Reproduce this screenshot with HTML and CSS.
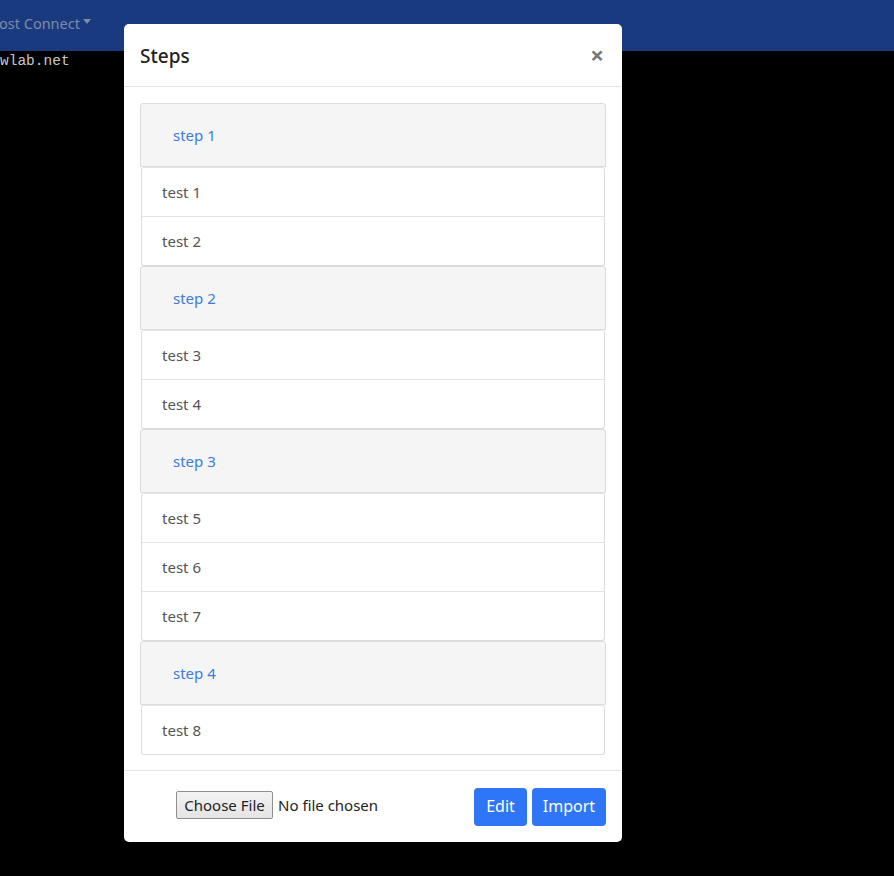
FILE: index.html
```html
<!DOCTYPE html>
<html>
<head>
<meta charset="utf-8">
<link rel="stylesheet" href="styles.css">
</head>
<body>
<nav class="navbar">
  <span class="nav-item">ost Connect<span class="caret"></span></span>
</nav>
<pre class="terminal">wlab.net</pre>

<div class="modal">
  <div class="modal-header">
    <h4 class="modal-title">Steps</h4>
    <span class="close">&times;</span>
  </div>
  <div class="modal-body">
    <div class="panel">
      <div class="panel-heading">step 1</div>
      <ul class="list-group">
        <li class="list-item">test 1</li>
        <li class="list-item">test 2</li>
      </ul>
    </div>
    <div class="panel">
      <div class="panel-heading">step 2</div>
      <ul class="list-group">
        <li class="list-item">test 3</li>
        <li class="list-item">test 4</li>
      </ul>
    </div>
    <div class="panel">
      <div class="panel-heading">step 3</div>
      <ul class="list-group">
        <li class="list-item">test 5</li>
        <li class="list-item">test 6</li>
        <li class="list-item">test 7</li>
      </ul>
    </div>
    <div class="panel">
      <div class="panel-heading">step 4</div>
      <ul class="list-group">
        <li class="list-item">test 8</li>
      </ul>
    </div>
  </div>
  <div class="modal-footer">
    <div class="file-input">
      <span class="file-btn">Choose File</span>
      <span class="file-name">No file chosen</span>
    </div>
    <div class="actions">
      <button class="btn btn-edit">Edit</button>
      <button class="btn btn-import">Import</button>
    </div>
  </div>
</div>
</body>
</html>
```
FILE: styles.css
```css
* { box-sizing: border-box; }
html, body { margin: 0; padding: 0; }
body {
  background: #000;
  width: 894px;
  height: 876px;
  overflow: hidden;
  font-family: "Noto Sans", "Open Sans", sans-serif;
  position: relative;
}
.navbar {
  height: 51px;
  background: #1a3a80;
  display: flex;
  align-items: center;
}
.nav-item {
  color: #7f8aa6;
  font-size: 14.5px;
  margin-left: -1px;
  margin-top: -5px;
  display: flex;
  align-items: center;
}
.caret {
  display: inline-block;
  width: 0;
  height: 0;
  border-left: 4px solid transparent;
  border-right: 4px solid transparent;
  border-top: 5px solid #7f8aa6;
  margin-left: 3px;
  margin-top: -3px;
}
.terminal {
  margin: 0;
  padding: 2px 0 0 0;
  font-family: "Liberation Mono", monospace;
  font-size: 14.5px;
  line-height: 17px;
  color: #c8c8c8;
}
.modal {
  position: absolute;
  left: 124px;
  top: 24px;
  width: 498px;
  height: 818px;
  background: #fff;
  border-radius: 5px;
  display: flex;
  flex-direction: column;
}
.modal-header {
  height: 63px;
  border-bottom: 1px solid #e3e3e3;
  display: flex;
  align-items: center;
  justify-content: space-between;
  padding: 0 17px 0 16px;
}
.modal-title {
  margin: 0;
  font-size: 19px;
  font-weight: 500;
  color: #222;
  padding-top: 2px;
}
.close {
  font-size: 24px;
  font-weight: 700;
  color: #777;
  line-height: 1;
  padding-bottom: 1px;
  margin-right: 1px;
}
.modal-body {
  padding: 16px 16px 16px 16px;
  height: 684px;
  border-bottom: 1px solid #e3e3e3;
}
.panel-heading {
  height: 64px;
  background: #f5f5f5;
  border: 1px solid #dcdcdc;
  border-radius: 3px 3px 0 0;
  display: flex;
  align-items: center;
  padding-left: 32px;
  padding-bottom: 1px;
  color: #3c7be0;
  font-size: 15px;
}
.list-group {
  list-style: none;
  margin: 0 1px;
  padding: 0;
  border: 1px solid #dcdcdc;
  border-top-color: #e6e6e6;
  border-radius: 3px;
}
.list-item {
  height: 49px;
  display: flex;
  align-items: center;
  padding-left: 20px;
  padding-bottom: 1px;
  font-size: 15px;
  color: #555;
  border-top: 1px solid #e3e3e3;
}
.list-item:first-child {
  border-top: none;
  height: 48px;
}
.modal-footer {
  flex: 1;
  display: flex;
  align-items: center;
  justify-content: space-between;
  padding: 0 16px 0 52px;
}
.file-input {
  display: flex;
  align-items: center;
  margin-top: -4px;
}
.file-btn {
  height: 28px;
  width: 97px;
  display: flex;
  align-items: center;
  justify-content: center;
  border: 1px solid #8f8f8f;
  border-radius: 2px;
  background: linear-gradient(#f3f3f3, #e4e4e4);
  color: #222;
  font-size: 15px;
}
.file-name {
  margin-left: 5px;
  font-size: 15px;
  color: #222;
}
.actions {
  display: flex;
  gap: 5px;
}
.btn {
  height: 38px;
  border: none;
  border-radius: 4px;
  background: #2f76f6;
  color: #fff;
  font-family: "Noto Sans", "Open Sans", sans-serif;
  font-size: 16px;
  padding: 0 0 1px 0;
}
.btn-edit { width: 53px; }
.btn-import { width: 74px; }
```
